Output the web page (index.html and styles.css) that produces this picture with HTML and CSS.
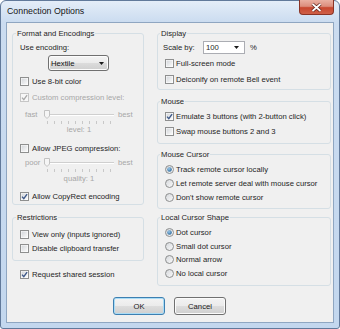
FILE: index.html
```html
<!DOCTYPE html>
<html lang="en">
<head>
    <meta charset="UTF-8">
    <title>Connection Options</title>
    <link rel="stylesheet" href="styles.css">
</head>
<body>
    <!-- shared glyphs for check boxes and radio buttons -->
    <svg class="defs" width="0" height="0">
        <defs>
            <linearGradient id="boxfill" x1="0" y1="0" x2="1" y2="1">
                <stop offset="0" stop-color="#d3d6da"/>
                <stop offset="1" stop-color="#fbfbfb"/>
            </linearGradient>
            <radialGradient id="dotfill" cx="0.4" cy="0.35" r="0.75">
                <stop offset="0" stop-color="#9ccbee"/>
                <stop offset="1" stop-color="#1d5a8c"/>
            </radialGradient>
            <symbol id="cb" viewBox="0 0 9 9">
                <rect x=".5" y=".5" width="8" height="8" fill="#fff" stroke="#8e8f8f"/>
                <rect x="1.5" y="1.5" width="6" height="6" fill="url(#boxfill)"/>
            </symbol>
            <symbol id="cbc" viewBox="0 0 9 9">
                <rect x=".5" y=".5" width="8" height="8" fill="#fff" stroke="#8e8f8f"/>
                <rect x="1.5" y="1.5" width="6" height="6" fill="url(#boxfill)"/>
                <path d="M2 4.6 L3.8 6.6 L7.1 2.1" fill="none" stroke="#3f5a8a" stroke-width="1.4"/>
            </symbol>
            <symbol id="cbd" viewBox="0 0 9 9">
                <rect x=".5" y=".5" width="8" height="8" fill="#f7f7f7" stroke="#c6c6c6"/>
                <path d="M2 4.6 L3.8 6.6 L7.1 2.1" fill="none" stroke="#a9a9a9" stroke-width="1.3"/>
            </symbol>
            <symbol id="rb" viewBox="0 0 9 9">
                <circle cx="4.5" cy="4.5" r="4" fill="url(#boxfill)" stroke="#8e8f8f"/>
            </symbol>
            <symbol id="rbs" viewBox="0 0 9 9">
                <circle cx="4.5" cy="4.5" r="4" fill="url(#boxfill)" stroke="#8e8f8f"/>
                <circle cx="4.5" cy="4.5" r="2.3" fill="url(#dotfill)"/>
            </symbol>
            <symbol id="arrow" viewBox="0 0 5 3">
                <polygon points="0,0 5,0 2.5,3" fill="#1a1a1a"/>
            </symbol>
        </defs>
    </svg>

    <div class="window">
        <div class="titlebar">
            <span class="title">Connection Options</span>
            <span class="close">
                <svg width="35" height="15" viewBox="0 0 35 15">
                    <path d="M13.5 4 L21.5 11 M21.5 4 L13.5 11" stroke="#5b2119" stroke-width="3.2"/>
                    <path d="M13.5 4 L21.5 11 M21.5 4 L13.5 11" stroke="#fff" stroke-width="1.7"/>
                </svg>
            </span>
        </div>

        <div class="client">
            <div class="columns">
                <div class="col col-left">
                    <fieldset class="group group-format">
                        <legend>Format and Encodings</legend>
                        <div class="row first">Use encoding:</div>
                        <div class="select">
                            <span>Hextile</span>
                            <svg class="arrow"><use href="#arrow"/></svg>
                        </div>
                        <div class="row space3"><svg class="box"><use href="#cb"/></svg>Use 8-bit color</div>
                        <div class="row space2 dim"><svg class="box"><use href="#cbd"/></svg>Custom compression level:</div>
                        <div class="slider space4">
                            <span class="lo dim">fast</span>
                            <div class="track">
                                <svg class="thumb" width="6" height="9" viewBox="0 0 6 9">
                                    <path d="M.5 .5 H5.5 V6 L3 8.5 L.5 6 Z" fill="#f5f5f5" stroke="#c2c2c2"/>
                                </svg>
                                <div class="groove"></div>
                                <div class="ticks"><i></i><i></i><i></i><i></i><i></i><i></i><i></i><i></i><i></i><i></i></div>
                            </div>
                            <span class="dim">best</span>
                        </div>
                        <div class="caption dim">level: 1</div>
                        <div class="row space5"><svg class="box"><use href="#cb"/></svg>Allow JPEG compression:</div>
                        <div class="slider space1">
                            <span class="lo dim">poor</span>
                            <div class="track">
                                <svg class="thumb" width="6" height="9" viewBox="0 0 6 9">
                                    <path d="M.5 .5 H5.5 V6 L3 8.5 L.5 6 Z" fill="#f5f5f5" stroke="#c2c2c2"/>
                                </svg>
                                <div class="groove"></div>
                                <div class="ticks"><i></i><i></i><i></i><i></i><i></i><i></i><i></i><i></i><i></i><i></i></div>
                            </div>
                            <span class="dim">best</span>
                        </div>
                        <div class="caption space1 dim">quality: 1</div>
                        <div class="row space4"><svg class="box"><use href="#cbc"/></svg>Allow CopyRect encoding</div>
                    </fieldset>

                    <fieldset class="group group-restrict">
                        <legend>Restrictions</legend>
                        <div class="row space5"><svg class="box"><use href="#cb"/></svg>View only (inputs ignored)</div>
                        <div class="row"><svg class="box"><use href="#cb"/></svg>Disable clipboard transfer</div>
                    </fieldset>

                    <div class="row shared"><svg class="box"><use href="#cbc"/></svg>Request shared session</div>
                </div>

                <div class="col col-right">
                    <fieldset class="group group-display">
                        <legend>Display</legend>
                        <div class="row scale">
                            <span class="scale-label">Scale by:</span>
                            <div class="combo">
                                <span>100</span>
                                <svg class="arrow"><use href="#arrow"/></svg>
                            </div>
                            <span class="pct">%</span>
                        </div>
                        <div class="row opt space2"><svg class="box"><use href="#cb"/></svg>Full-screen mode</div>
                        <div class="row opt space2"><svg class="box"><use href="#cb"/></svg>Deiconify on remote Bell event</div>
                    </fieldset>

                    <fieldset class="group group-mouse">
                        <legend>Mouse</legend>
                        <div class="row opt space3"><svg class="box"><use href="#cbc"/></svg>Emulate 3 buttons (with 2-button click)</div>
                        <div class="row opt space1"><svg class="box"><use href="#cb"/></svg>Swap mouse buttons 2 and 3</div>
                    </fieldset>

                    <fieldset class="group group-cursor">
                        <legend>Mouse Cursor</legend>
                        <div class="row opt space3"><svg class="box"><use href="#rbs"/></svg>Track remote cursor locally</div>
                        <div class="row opt"><svg class="box"><use href="#rb"/></svg>Let remote server deal with mouse cursor</div>
                        <div class="row opt"><svg class="box"><use href="#rb"/></svg>Don't show remote cursor</div>
                    </fieldset>

                    <fieldset class="group group-shape">
                        <legend>Local Cursor Shape</legend>
                        <div class="row opt tight space4"><svg class="box"><use href="#rbs"/></svg>Dot cursor</div>
                        <div class="row opt tight"><svg class="box"><use href="#rb"/></svg>Small dot cursor</div>
                        <div class="row opt tight"><svg class="box"><use href="#rb"/></svg>Normal arrow</div>
                        <div class="row opt tight"><svg class="box"><use href="#rb"/></svg>No local cursor</div>
                    </fieldset>
                </div>
            </div>

            <div class="buttons">
                <button class="btn btn-default">OK</button>
                <button class="btn">Cancel</button>
            </div>
        </div>
    </div>
</body>
</html>
```

FILE: styles.css
```css
body {
    margin: 0;
    font-family: "Liberation Sans", Arial, sans-serif;
    font-size: 7.7px;
    color: #1e1e1e;
    background: #fff;
}

.defs {
    display: block;
    width: 0;
    height: 0;
}

.window {
    width: 340px;
    height: 329px;
    box-sizing: border-box;
    border: 1px solid #61799a;
    border-radius: 6px 6px 3px 3px;
    padding: 0 5px 5px;
    background: linear-gradient(#e4edf8, #cbdcf0 21px, #c3d7ee);
    display: flex;
    flex-direction: column;
}

.titlebar {
    height: 21px;
    display: flex;
    justify-content: space-between;
    align-items: flex-start;
}

.title {
    line-height: 21px;
    padding-left: 1px;
    font-size: 8.8px;
    color: #161616;
}

.close {
    width: 35px;
    height: 15px;
    margin-top: -1px;
    box-sizing: border-box;
    border: 1px solid #8a3325;
    border-top: none;
    border-radius: 0 0 4px 4px;
    background: linear-gradient(#eab0a2, #dc8e7d 45%, #c8472f 55%, #cf6048);
    display: flex;
    justify-content: center;
}

.close svg {
    margin-left: -1px;
    flex: none;
}

.client {
    flex: 1;
    border: 1px solid #8fa6c1;
    background: #f0f0f0;
    padding: 0 2px 0 5px;
}

.columns {
    display: flex;
    gap: 13px;
    margin-top: 6px;
    align-items: flex-start;
}

.col-left {
    width: 132px;
}

.col-right {
    width: 174px;
}

.group {
    margin: 0;
    padding: 0 4px 0 7px;
    min-width: 0;
    border: 1px solid #d5dfe5;
    border-radius: 3px;
}

.group legend {
    padding: 0 1px;
    margin-left: -4px;
    line-height: 9px;
    height: 9px;
}

.col-right .group {
    padding-left: 5px;
}

.col-right .group legend {
    margin-left: -3px;
}

.group-format {
    padding-bottom: 1px;
}

.group-restrict {
    margin-top: 8px;
    padding-bottom: 5px;
}

.group-display {
    padding-bottom: 3px;
}

.group-mouse {
    margin-top: 7px;
    padding-bottom: 5px;
}

.group-cursor {
    margin-top: 6px;
    padding-bottom: 4px;
}

.group-shape {
    margin-top: 4px;
    padding-bottom: 5px;
}

.row {
    display: flex;
    align-items: center;
    height: 14px;
    line-height: 9px;
    white-space: nowrap;
}

.row.tight {
    height: 13.5px;
}

.row .box {
    width: 9px;
    height: 9px;
    flex: none;
    margin-right: 3px;
}

.row.opt {
    margin-left: 2px;
}

.row.opt .box {
    margin-right: 2px;
}

.first { margin-top: 2px; }
.space1 { margin-top: 1px; }
.space2 { margin-top: 2px; }
.space3 { margin-top: 3px; }
.space4 { margin-top: 4px; }
.space5 { margin-top: 5px; }

.dim {
    color: #a7a7a7;
}

.select {
    margin: 1px 0 0 28px;
    width: 61px;
    height: 16px;
    box-sizing: border-box;
    border: 1px solid #707070;
    border-radius: 3px;
    background: linear-gradient(#f4f4f4, #ebebeb 50%, #dcdcdc 50%, #cfcfcf);
    box-shadow: inset 0 0 0 1px #fcfcfc;
    display: flex;
    align-items: center;
    justify-content: space-between;
    padding: 0 4px 0 2px;
    color: #111;
}

.arrow {
    width: 5px;
    height: 3px;
    flex: none;
}

.slider {
    display: flex;
    height: 16px;
    margin-left: 5px;
    align-items: flex-start;
}

.slider > span {
    line-height: 14px;
}

.slider .lo {
    width: 19px;
}

.track {
    width: 70px;
    height: 16px;
    margin-right: 4px;
    padding-top: 6px;
    box-sizing: border-box;
    position: relative;
}

.groove {
    border-top: 1px solid #cfcfcf;
    border-bottom: 1px solid #fff;
}

.thumb {
    position: absolute;
    left: 0;
    top: 2px;
}

.ticks {
    display: flex;
    justify-content: space-between;
    margin-top: 5px;
    padding: 0 3px;
    height: 3px;
}

.ticks i {
    width: 1px;
    height: 3px;
    background: #c8c8c8;
}

.caption {
    margin-left: 24px;
    width: 70px;
    height: 12px;
    line-height: 12px;
    text-align: center;
}

.shared {
    margin: 6px 0 0 8px;
}

.scale {
    height: 13px;
    margin-top: 3px;
}

.scale-label {
    width: 40px;
}

.combo {
    width: 42px;
    height: 13px;
    box-sizing: border-box;
    border: 1px solid #abadb3;
    background: #fff;
    display: flex;
    align-items: center;
    justify-content: space-between;
    padding: 0 5px 0 2px;
}

.pct {
    margin-left: 5px;
}

.buttons {
    display: flex;
    justify-content: center;
    gap: 9px;
    margin: 11px 0 0 -4px;
}

.btn {
    width: 52px;
    height: 18px;
    padding: 0;
    font-family: inherit;
    font-size: 7.7px;
    color: #1a1a1a;
    border: 1px solid #707070;
    border-radius: 3px;
    background: linear-gradient(#f3f3f3, #ebebeb 50%, #dddddd 50%, #cfcfcf);
    box-shadow: inset 0 0 0 1px #fbfbfb;
}

.btn-default {
    border-color: #3c7fb1;
    box-shadow: inset 0 0 0 1px #a9dcf6;
}
```
